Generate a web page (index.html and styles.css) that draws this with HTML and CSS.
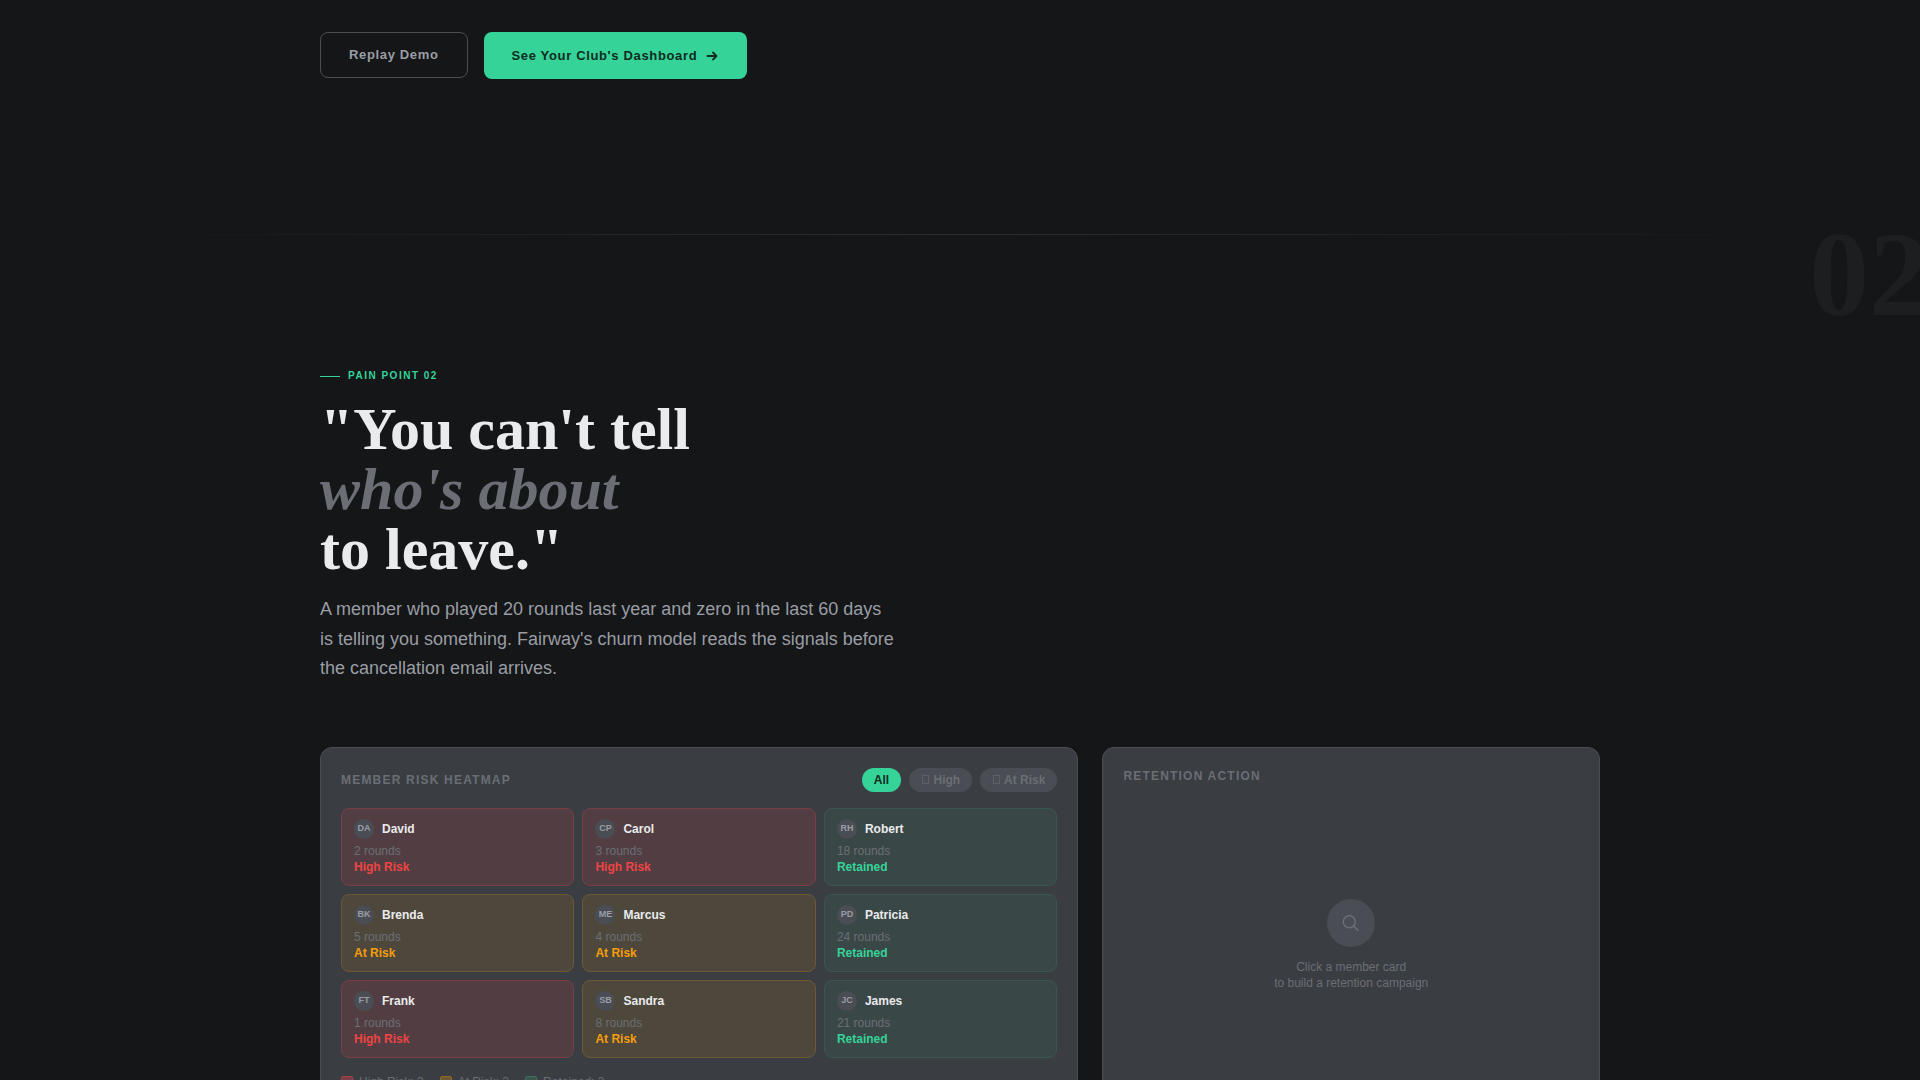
FILE: index.html
```
<!DOCTYPE html>
<html lang="en">
<head>
  <meta charset="UTF-8">
  <meta name="viewport" content="width=device-width, initial-scale=1.0">
  <title>Fairway</title>
  <link rel="stylesheet" href="styles.css">
</head>
<body>
  <div class="container cta-row">
    <button class="btn btn-outline" type="button">Replay Demo</button>
    <a class="btn btn-primary" href="#dashboard">
      See Your Club's Dashboard
      <svg width="14" height="14" viewBox="0 0 14 14" fill="none" stroke="currentColor" stroke-width="1.8" stroke-linecap="round" stroke-linejoin="round">
        <path d="M2.5 7h9M8 3.5L11.5 7 8 10.5"/>
      </svg>
    </a>
  </div>

  <div class="divider"></div>

  <section class="pain-point">
    <div class="section-number">02</div>
    <div class="container">
      <div class="eyebrow">Pain Point 02</div>
      <h2>"You can't tell<br><em>who's about</em><br>to leave."</h2>
      <p class="lead">A member who played 20 rounds last year and zero in the last 60 days is telling you something. Fairway's churn model reads the signals before the cancellation email arrives.</p>

      <div class="panels">
        <div class="panel heatmap">
          <div class="panel-header">
            <h3>Member Risk Heatmap</h3>
            <div class="filters">
              <button class="filter active" type="button">All</button>
              <button class="filter" type="button"><span class="mark"></span> High</button>
              <button class="filter" type="button"><span class="mark"></span> At Risk</button>
            </div>
          </div>

          <div class="members">
            <button class="member high" type="button">
              <span class="who"><span class="avatar">DA</span><span class="name">David</span></span>
              <span class="rounds">2 rounds</span>
              <span class="status">High Risk</span>
            </button>
            <button class="member high" type="button">
              <span class="who"><span class="avatar">CP</span><span class="name">Carol</span></span>
              <span class="rounds">3 rounds</span>
              <span class="status">High Risk</span>
            </button>
            <button class="member retained" type="button">
              <span class="who"><span class="avatar">RH</span><span class="name">Robert</span></span>
              <span class="rounds">18 rounds</span>
              <span class="status">Retained</span>
            </button>
            <button class="member risk" type="button">
              <span class="who"><span class="avatar">BK</span><span class="name">Brenda</span></span>
              <span class="rounds">5 rounds</span>
              <span class="status">At Risk</span>
            </button>
            <button class="member risk" type="button">
              <span class="who"><span class="avatar">ME</span><span class="name">Marcus</span></span>
              <span class="rounds">4 rounds</span>
              <span class="status">At Risk</span>
            </button>
            <button class="member retained" type="button">
              <span class="who"><span class="avatar">PD</span><span class="name">Patricia</span></span>
              <span class="rounds">24 rounds</span>
              <span class="status">Retained</span>
            </button>
            <button class="member high" type="button">
              <span class="who"><span class="avatar">FT</span><span class="name">Frank</span></span>
              <span class="rounds">1 rounds</span>
              <span class="status">High Risk</span>
            </button>
            <button class="member risk" type="button">
              <span class="who"><span class="avatar">SB</span><span class="name">Sandra</span></span>
              <span class="rounds">8 rounds</span>
              <span class="status">At Risk</span>
            </button>
            <button class="member retained" type="button">
              <span class="who"><span class="avatar">JC</span><span class="name">James</span></span>
              <span class="rounds">21 rounds</span>
              <span class="status">Retained</span>
            </button>
          </div>

          <div class="legend">
            <span class="legend-item"><span class="swatch high"></span>High Risk: 3</span>
            <span class="legend-item"><span class="swatch risk"></span>At Risk: 3</span>
            <span class="legend-item"><span class="swatch retained"></span>Retained: 3</span>
          </div>
        </div>

        <div class="panel action">
          <h3>Retention Action</h3>
          <div class="empty">
            <div class="empty-icon">
              <svg width="20" height="20" viewBox="0 0 20 20" fill="none" stroke="currentColor" stroke-width="1.5" stroke-linecap="round">
                <circle cx="8.3" cy="8.7" r="6"/>
                <path d="M12.7 13.1l4.2 4"/>
              </svg>
            </div>
            <p>Click a member card<br>to build a retention campaign</p>
          </div>
        </div>
      </div>
    </div>
  </section>
</body>
</html>
```

FILE: styles.css
```
* {
  box-sizing: border-box;
  margin: 0;
  padding: 0;
}

body {
  font-family: "Liberation Sans", Arial, sans-serif;
  background-color: #141618;
  color: #eaebed;
  overflow-x: hidden;
}

button {
  font-family: inherit;
  cursor: pointer;
}

.container {
  max-width: 1328px;
  margin: 0 auto;
  padding: 0 24px;
}

/* Buttons */
.cta-row {
  display: flex;
  align-items: flex-start;
  gap: 16px;
  padding-top: 32px;
  padding-bottom: 155px;
}

.btn {
  display: inline-flex;
  align-items: center;
  gap: 8px;
  border-radius: 8px;
  font-size: 13px;
  font-weight: 700;
  line-height: 16px;
  letter-spacing: 0.05em;
  text-decoration: none;
}

.btn-outline {
  padding: 14px 28px;
  border: 1px solid #4a4d54;
  background: none;
  color: #9a9da3;
}

.btn-primary {
  padding: 16px 28px 15px;
  background-color: #36d399;
  color: #0d2b20;
}

.divider {
  height: 1px;
  margin: 0 128px;
  background: linear-gradient(to right, transparent, #2b2e32, transparent);
}

/* Pain point section */
.pain-point {
  position: relative;
  padding: 133px 0 128px;
}

.section-number {
  position: absolute;
  top: -20px;
  right: -9px;
  font-family: "Liberation Serif", serif;
  font-size: 120px;
  font-weight: 700;
  line-height: 1;
  color: #1c1e20;
}

.eyebrow {
  display: flex;
  align-items: center;
  gap: 8px;
  margin-bottom: 15px;
  font-size: 10px;
  font-weight: 700;
  line-height: 16px;
  letter-spacing: 0.15em;
  text-transform: uppercase;
  color: #36d399;
}

.eyebrow::before {
  content: "";
  width: 20px;
  height: 1px;
  background-color: #36d399;
}

h2 {
  margin-bottom: 16px;
  font-family: "Liberation Serif", serif;
  font-size: 60px;
  line-height: 60px;
}

h2 em {
  color: #6b6e75;
}

.lead {
  max-width: 576px;
  margin-bottom: 63px;
  font-size: 18px;
  line-height: 1.65;
  color: #9a9da3;
}

/* Panels */
.panels {
  display: grid;
  grid-template-columns: repeat(5, 1fr);
  gap: 24px;
}

.panel {
  padding: 20px;
  border: 1px solid #4a4d53;
  border-radius: 12px;
  background-color: #3a3d42;
}

.heatmap {
  grid-column: span 3;
}

.action {
  grid-column: span 2;
  display: flex;
  flex-direction: column;
}

.panel-header {
  display: flex;
  align-items: center;
  justify-content: space-between;
  margin-bottom: 16px;
}

h3 {
  font-size: 12px;
  font-weight: 700;
  line-height: 16px;
  letter-spacing: 0.1em;
  text-transform: uppercase;
  color: #6b6e75;
}

.action h3 {
  margin-bottom: 16px;
}

.filters {
  display: flex;
  gap: 8px;
}

.filter {
  padding: 4px 12px;
  border: none;
  border-radius: 12px;
  background-color: #4a4d54;
  font-size: 12px;
  font-weight: 700;
  line-height: 16px;
  color: #6b6e75;
}

.filter.active {
  background-color: #36d399;
  color: #0d2b20;
}

.mark {
  display: inline-block;
  width: 7px;
  height: 9px;
  margin: 0 1px;
  border: 1px solid #5c5f66;
}

/* Member cards */
.members {
  display: grid;
  grid-template-columns: repeat(3, 1fr);
  gap: 8px;
}

.member {
  display: flex;
  flex-direction: column;
  padding: 10px 12px;
  border: 1px solid;
  border-radius: 8px;
  font-size: 12px;
  line-height: 16px;
  text-align: left;
}

.who {
  display: flex;
  align-items: center;
  gap: 8px;
  margin-bottom: 4px;
}

.avatar {
  width: 20px;
  height: 20px;
  border-radius: 50%;
  background-color: #4a4d54;
  font-size: 9px;
  font-weight: 700;
  line-height: 18px;
  text-align: center;
  color: #9a9da3;
}

.name {
  font-weight: 700;
  color: #eaebed;
}

.rounds {
  color: #6b6e75;
}

.status {
  font-weight: 700;
}

.high .status {
  color: #ef4444;
}

.risk .status {
  color: #f59e0b;
}

.retained .status {
  color: #36d399;
}

.legend {
  display: flex;
  gap: 16px;
  margin-top: 16px;
  font-size: 12px;
  line-height: 16px;
  color: #6b6e75;
}

.legend-item {
  display: flex;
  align-items: center;
  gap: 6px;
}

.swatch {
  width: 12px;
  height: 12px;
  border: 1px solid;
  border-radius: 2px;
}

/* Risk colours */
.high {
  background-color: #523e42;
  border-color: #7a3f46;
}

.risk {
  background-color: #4e483c;
  border-color: #6e5833;
}

.retained {
  background-color: #3a4747;
  border-color: #3a564f;
}

.swatch.high {
  background-color: #7a3f46;
  border-color: #a84048;
}

.swatch.risk {
  background-color: #6e5833;
  border-color: #946a28;
}

.swatch.retained {
  background-color: #3a564f;
  border-color: #39705f;
}

/* Empty state */
.empty {
  flex: 1;
  display: flex;
  flex-direction: column;
  align-items: center;
  justify-content: center;
  gap: 12px;
  font-size: 12px;
  line-height: 16px;
  text-align: center;
  color: #6b6e75;
}

.empty-icon {
  display: flex;
  align-items: center;
  justify-content: center;
  width: 48px;
  height: 48px;
  border-radius: 50%;
  background-color: #4a4d54;
}
```
